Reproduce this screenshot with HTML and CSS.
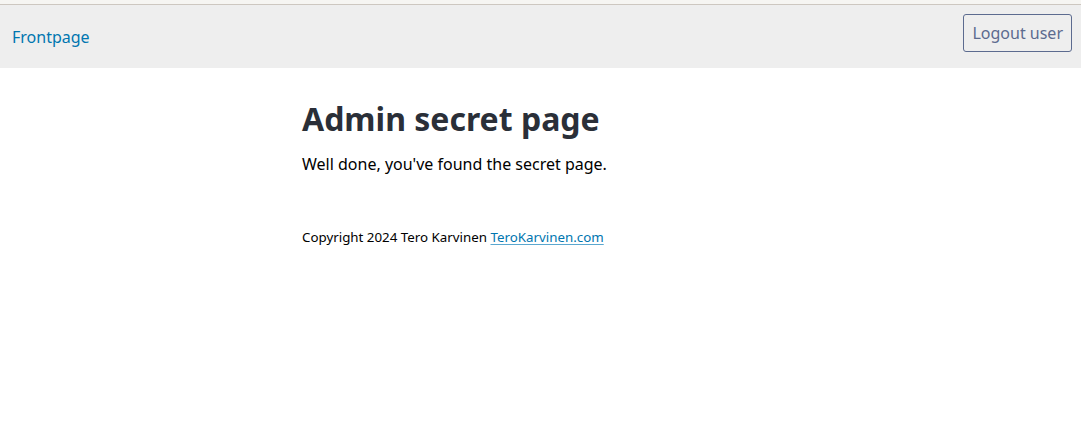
FILE: index.html
```html
<!DOCTYPE html>
<html lang="en">
<head>
<meta charset="utf-8">
<title>Admin secret page</title>
<link rel="stylesheet" href="styles.css">
</head>
<body>
<div class="top-edge"></div>
<header class="site-header">
  <nav><a class="nav-link" href="#">Frontpage</a></nav>
  <form class="logout-form"><button class="logout-button" type="button">Logout user</button></form>
</header>
<main class="content">
  <h1 class="title">Admin secret page</h1>
  <p class="message">Well done, you've found the secret page.</p>
  <footer class="copyright">Copyright 2024 Tero Karvinen <a class="author-link" href="#">TeroKarvinen.com</a></footer>
</main>
</body>
</html>
```

FILE: styles.css
```css
* {
  box-sizing: border-box;
}

body {
  margin: 0;
  background: #fff;
  color: #000;
  font-family: "Noto Sans", sans-serif;
  font-size: 16px;
  line-height: 24px;
}

.top-edge {
  height: 5px;
  background: #f6f5f2;
  border-bottom: 1px solid #cdc7c0;
}

.site-header {
  display: flex;
  justify-content: space-between;
  align-items: flex-start;
  padding: 9px 9px 16px 12px;
  background: #eee;
}

.nav-link {
  display: block;
  margin-top: 11px;
  color: #0076b0;
  text-decoration: none;
}

.logout-button {
  display: block;
  padding: 6px 8px;
  border: 1px solid #5c6b8f;
  border-radius: 3px;
  background: transparent;
  color: #5c6b8f;
  font: inherit;
}

.content {
  max-width: 477px;
  margin: 0 auto;
  padding-top: 28px;
}

.title {
  margin: 0;
  color: #2a2f38;
  font-size: 32px;
  line-height: 46px;
}

.message {
  margin: 10px 0 0;
}

.copyright {
  margin-top: 49px;
  font-size: smaller;
  line-height: 24px;
}

.author-link {
  color: #0076b0;
  text-decoration: underline 1px #5ba7cf;
  text-decoration-skip-ink: none;
  text-underline-offset: 2px;
}
```
